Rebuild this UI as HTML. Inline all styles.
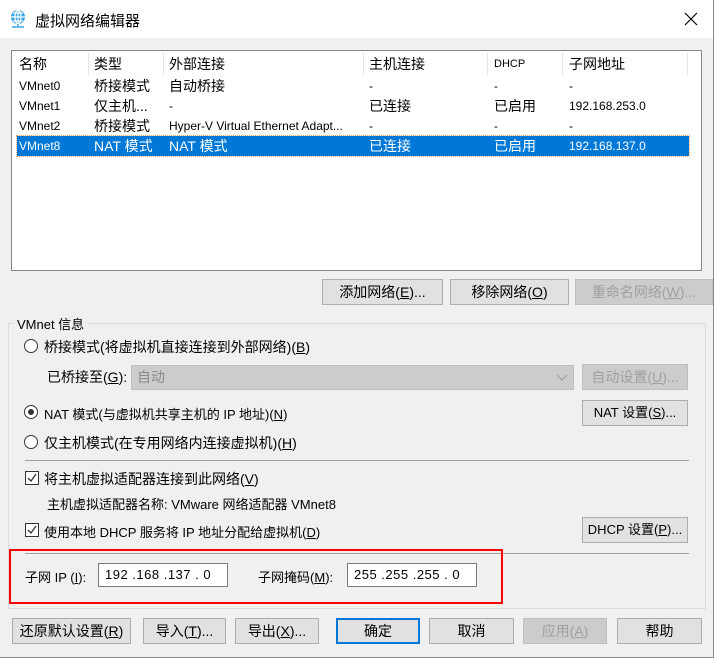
<!DOCTYPE html>
<html><head><meta charset="utf-8"><style>
*{box-sizing:border-box;margin:0;padding:0}
body{width:714px;height:658px;background:#f0f0f0;font-family:"Liberation Sans","Microsoft YaHei","Noto Sans CJK SC",sans-serif;font-size:13px;color:#000;position:relative;overflow:hidden}
.a{position:absolute;white-space:nowrap}
.title{left:0;top:0;width:714px;height:38px;background:#fff}
.list{left:11px;top:50px;width:691px;height:221px;background:#fff;border:1px solid #828790}
.hs{position:absolute;top:2px;width:1px;height:22px;background:#e5e5e5}
.row{position:absolute;left:0;width:680px;height:20px;line-height:20px}
.row div{position:absolute;top:0;white-space:nowrap}
.btn{position:absolute;height:26px;border:1px solid #adadad;background:#e1e1e1;text-align:center;line-height:24px;font-size:14px}
.dis{color:#a0a0a0;border-color:#bfbfbf;background:#ccc}
.radio{position:absolute;width:14px;height:14px;border:1px solid #333;border-radius:50%;background:#fff}
.chk{position:absolute;width:14px;height:14px;border:1px solid #333;background:#fff}
.inp{position:absolute;height:24px;border:1px solid #7a7a7a;background:#fff;line-height:22px;padding-left:6px;font-size:13px;letter-spacing:0.5px}
.t14{font-size:14px}
.s12{font-size:12px}
u{text-decoration:underline}
</style></head><body>
<div class="a title"></div>
<div class="a" style="left:713px;top:0;width:1px;height:658px;background:#888"></div>
<div class="a" style="left:0;top:657px;width:714px;height:1px;background:#888"></div>
<svg class="a" style="left:9px;top:9px" width="18" height="20" viewBox="0 0 18 20"><circle cx="9" cy="8" r="7" fill="#3aa3e3"/><path d="M2 8h14M9 1v14M4 4h10M4 12h10" stroke="#fff" stroke-width="1.2" fill="none"/><ellipse cx="9" cy="8" rx="3" ry="7" stroke="#fff" stroke-width="1.2" fill="none"/><path d="M9 15v2M3 18h12" stroke="#3aa3e3" stroke-width="1.5"/></svg>
<div class="a" style="left:35px;top:10px;font-size:15px">虚拟网络编辑器</div>
<svg class="a" style="left:684px;top:12px" width="14" height="14"><path d="M1 1L13 13M13 1L1 13" stroke="#000" stroke-width="1.2"/></svg>

<div class="a list">
 <div class="hs" style="left:76px"></div><div class="hs" style="left:151px"></div><div class="hs" style="left:351px"></div><div class="hs" style="left:475px"></div><div class="hs" style="left:550px"></div><div class="hs" style="left:675px"></div>
 <div class="row t14" style="top:2px;height:22px;line-height:22px"><div style="left:7px">名称</div><div style="left:82px">类型</div><div style="left:157px">外部连接</div><div style="left:357px">主机连接</div><div style="left:482px;font-size:11px">DHCP</div><div style="left:557px">子网地址</div></div>
 <div class="row s12" style="top:25px"><div style="left:7px">VMnet0</div><div class="t14" style="left:82px">桥接模式</div><div class="t14" style="left:157px">自动桥接</div><div style="left:357px">-</div><div style="left:482px">-</div><div style="left:557px">-</div></div>
 <div class="row s12" style="top:45px"><div style="left:7px">VMnet1</div><div class="t14" style="left:82px">仅主机...</div><div style="left:157px">-</div><div class="t14" style="left:357px">已连接</div><div class="t14" style="left:482px">已启用</div><div style="left:557px">192.168.253.0</div></div>
 <div class="row s12" style="top:65px"><div style="left:7px">VMnet2</div><div class="t14" style="left:82px">桥接模式</div><div style="left:157px">Hyper-V Virtual Ethernet Adapt...</div><div style="left:357px">-</div><div style="left:482px">-</div><div style="left:557px">-</div></div>
 <div class="row s12" style="top:85px;left:5px;width:672px;background:#0078d7;color:#fff;outline:1px dotted #f0a060"><div style="left:2px">VMnet8</div><div class="t14" style="left:77px">NAT 模式</div><div class="t14" style="left:152px">NAT 模式</div><div class="t14" style="left:352px">已连接</div><div class="t14" style="left:477px">已启用</div><div style="left:552px">192.168.137.0</div></div>
</div>

<div class="btn" style="left:322px;top:279px;width:121px">添加网络(<u>E</u>)...</div>
<div class="btn" style="left:450px;top:279px;width:119px">移除网络(<u>O</u>)</div>
<div class="btn dis" style="left:575px;top:279px;width:138px">重命名网络(<u>W</u>)...</div>

<div class="a" style="left:8px;top:323px;width:698px;height:286px;border:1px solid #dcdcdc"></div>
<div class="a" style="left:14px;top:314px;background:#f0f0f0;padding:0 3px">VMnet 信息</div>

<div class="radio" style="left:24px;top:339px"></div>
<div class="a t14" style="left:44px;top:337px">桥接模式(将虚拟机直接连接到外部网络)(<u>B</u>)</div>
<div class="a t14" style="left:47px;top:367px">已桥接至(<u>G</u>):</div>
<div class="a" style="left:131px;top:365px;width:443px;height:25px;background:#ccc;border:1px solid #bfbfbf;color:#8a8a8a;padding-left:5px;line-height:22px;font-size:14px">自动<svg style="position:absolute;right:6px;top:9px" width="10" height="6"><path d="M0 0L5 5L10 0" stroke="#999" fill="none"/></svg></div>
<div class="btn dis" style="left:582px;top:364px;width:106px">自动设置(<u>U</u>)...</div>
<div class="radio" style="left:24px;top:405px"><div style="position:absolute;left:3px;top:3px;width:6px;height:6px;border-radius:50%;background:#333"></div></div>
<div class="a" style="left:44px;top:404px">NAT 模式(与虚拟机共享主机的 IP 地址)(<u>N</u>)</div>
<div class="btn" style="left:582px;top:400px;width:106px;font-size:13px">NAT 设置(<u>S</u>)...</div>
<div class="radio" style="left:24px;top:435px"></div>
<div class="a t14" style="left:44px;top:433px">仅主机模式(在专用网络内连接虚拟机)(<u>H</u>)</div>
<div class="a" style="left:25px;top:460px;width:664px;height:1px;background:#a0a0a0"></div>

<div class="chk" style="left:25px;top:471px"><svg width="12" height="12" style="position:absolute;left:0;top:0"><path d="M2 6L5 9L10 2" stroke="#333" stroke-width="1.3" fill="none"/></svg></div>
<div class="a t14" style="left:44px;top:469px">将主机虚拟适配器连接到此网络(<u>V</u>)</div>
<div class="a" style="left:47px;top:494px">主机虚拟适配器名称: VMware 网络适配器 VMnet8</div>
<div class="chk" style="left:25px;top:523px"><svg width="12" height="12" style="position:absolute;left:0;top:0"><path d="M2 6L5 9L10 2" stroke="#333" stroke-width="1.3" fill="none"/></svg></div>
<div class="a" style="left:44px;top:522px">使用本地 DHCP 服务将 IP 地址分配给虚拟机(<u>D</u>)</div>
<div class="btn" style="left:582px;top:517px;width:106px;font-size:13px">DHCP 设置(<u>P</u>)...</div>
<div class="a" style="left:25px;top:553px;width:664px;height:1px;background:#a0a0a0"></div>

<div class="a" style="left:9px;top:549px;width:494px;height:55px;border:2px solid #f00"></div>
<div class="a" style="left:25px;top:567px">子网 IP (<u>I</u>):</div>
<div class="inp" style="left:98px;top:563px;width:130px">192 .168 .137 . 0</div>
<div class="a" style="left:258px;top:567px">子网掩码(<u>M</u>):</div>
<div class="inp" style="left:347px;top:563px;width:130px">255 .255 .255 . 0</div>

<div class="btn" style="left:12px;top:618px;width:119px">还原默认设置(<u>R</u>)</div>
<div class="btn" style="left:143px;top:618px;width:83px">导入(<u>T</u>)...</div>
<div class="btn" style="left:235px;top:618px;width:84px">导出(<u>X</u>)...</div>
<div class="btn" style="left:336px;top:618px;width:84px;border:2px solid #0078d7;line-height:22px">确定</div>
<div class="btn" style="left:429px;top:618px;width:85px">取消</div>
<div class="btn dis" style="left:523px;top:618px;width:84px">应用(<u>A</u>)</div>
<div class="btn" style="left:617px;top:618px;width:85px">帮助</div>
</body></html>
